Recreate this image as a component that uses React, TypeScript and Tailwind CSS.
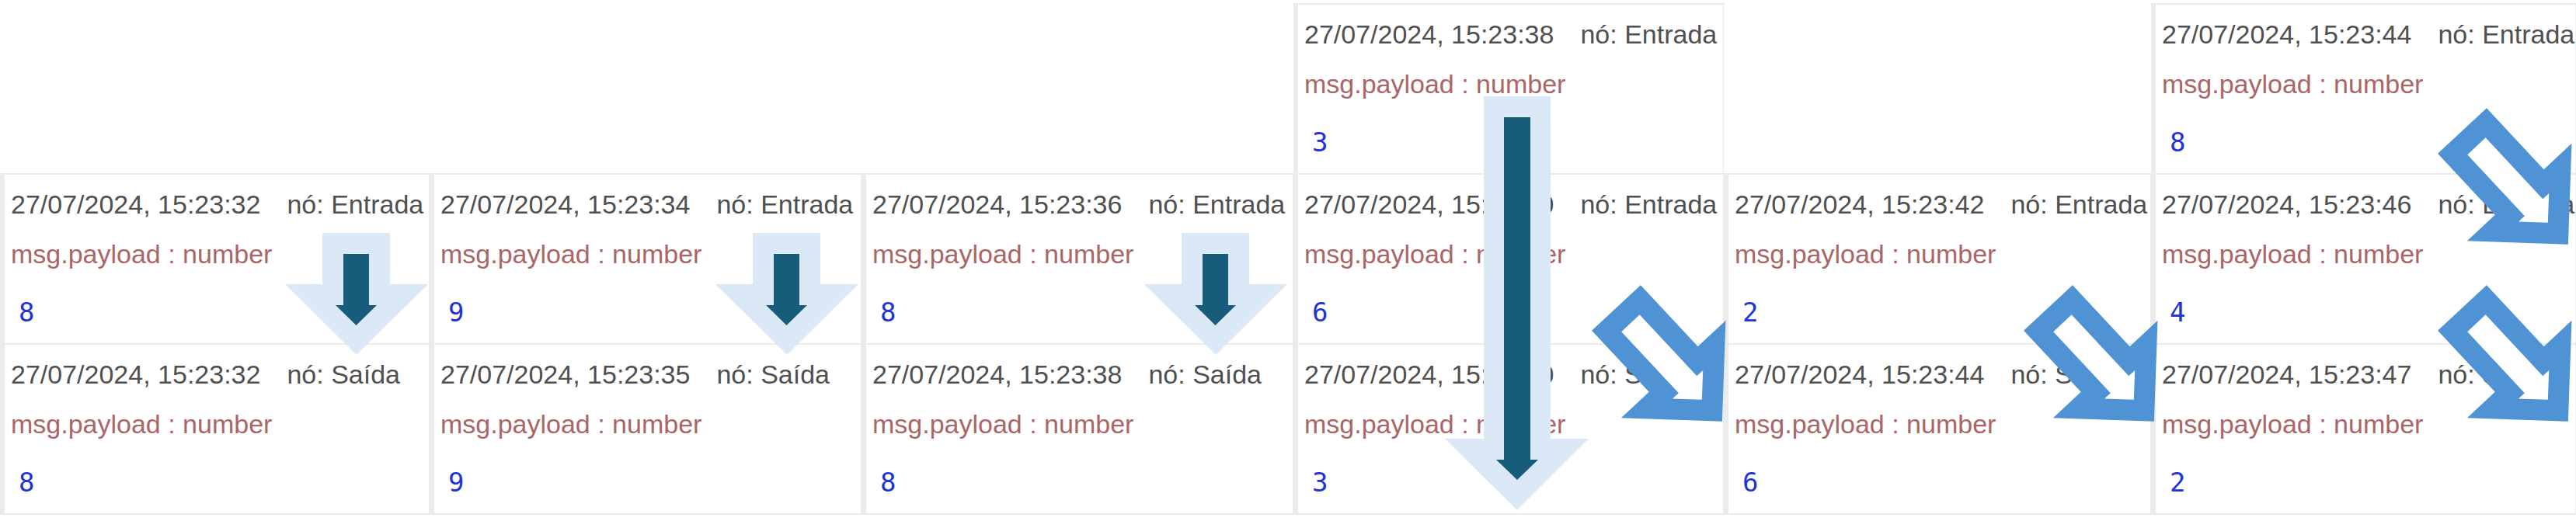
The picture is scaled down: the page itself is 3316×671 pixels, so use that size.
import React from "react";

type Card = { t: string; n: string; v: string };
type Col = { w: string; cards: Card[] };

const cols: Col[] = [
  { w: "w-[553px]", cards: [ { t: "15:23:32", n: "Entrada", v: "8" }, { t: "15:23:32", n: "Saída", v: "8" } ] },
  { w: "w-[556px]", cards: [ { t: "15:23:34", n: "Entrada", v: "9" }, { t: "15:23:35", n: "Saída", v: "9" } ] },
  { w: "w-[556px]", cards: [ { t: "15:23:36", n: "Entrada", v: "8" }, { t: "15:23:38", n: "Saída", v: "8" } ] },
  { w: "w-[554px]", cards: [ { t: "15:23:38", n: "Entrada", v: "3" }, { t: "15:23:40", n: "Entrada", v: "6" }, { t: "15:23:40", n: "Saída", v: "3" } ] },
  { w: "w-[550px]", cards: [ { t: "15:23:42", n: "Entrada", v: "2" }, { t: "15:23:44", n: "Saída", v: "6" } ] },
  { w: "w-[547px]", cards: [ { t: "15:23:44", n: "Entrada", v: "8" }, { t: "15:23:46", n: "Entrada", v: "4" }, { t: "15:23:47", n: "Saída", v: "2" } ] },
];

function DebugCard({ c }: { c: Card }) {
  return (
    <div className="h-[219px] bg-white border-b-[2px] border-[#ebebeb] pl-[8px] pt-[18px] overflow-hidden">
      <div className="flex whitespace-nowrap h-[40px] leading-[40px] text-[34px] text-[#505050] font-['Liberation_Sans',Arial,sans-serif]">
        <span className="mr-[34px]">27/07/2024, {c.t}</span>
        <span>nó: {c.n}</span>
      </div>
      <div className="mt-[24px] whitespace-nowrap h-[40px] leading-[40px] text-[34px] text-[#aa6666] font-['Liberation_Sans',Arial,sans-serif]">
        msg.payload : number
      </div>
      <div className="mt-[35px] ml-[10px] h-[40px] leading-[40px] text-[34px] text-[#2033d6] font-['DejaVu_Sans_Mono',monospace]">
        {c.v}
      </div>
    </div>
  );
}

const DIAG_OUTER = "M0 -43 L108 -43 L108 -92 L200 0 L108 92 L108 43 L0 43 Z";
const DIAG_INNER = "M27 -16 L135 -16 L135 -26.8 L161.8 0 L135 26.8 L135 16 L27 16 Z";

function Diag({ x, y }: { x: number; y: number }) {
  return (
    <g transform={`translate(${x} ${y}) rotate(47)`}>
      <path d={DIAG_OUTER} fill="#4f93d5" />
      <path d={DIAG_INNER} fill="#ffffff" />
    </g>
  );
}

function ShortDown({ x }: { x: number }) {
  return (
    <g transform={`translate(${x} 300)`}>
      <path d="M48 0 H135 V66 H184 L92 157 L0 66 H48 Z" fill="#dbe8f5" />
      <path d="M75 27 H108 V93 H118 L91.5 119 L65 93 H75 Z" fill="#185c7c" />
    </g>
  );
}

export default function App() {
  return (
    <div className="relative w-[3316px] h-[671px] bg-white overflow-hidden">
      <div className="flex items-end h-full pb-[8px]">
        {cols.map((col, i) => (
          <div
            key={i}
            className={`${col.w} shrink-0 flex flex-col border-l-[6px] border-r-[1px] border-t-[2px] border-[#ebebeb]`}
          >
            {col.cards.map((c, j) => (
              <DebugCard key={j} c={c} />
            ))}
          </div>
        ))}
      </div>
      <svg
        className="absolute inset-0 pointer-events-none"
        width={3316}
        height={671}
        viewBox="0 0 3316 671"
      >
        <ShortDown x={367} />
        <ShortDown x={921} />
        <ShortDown x={1473} />
        <g transform="translate(1860 124)">
          <path d="M50 0 H136 V441 H185 L93 533 L0 441 H50 Z" fill="#dbe8f5" />
          <path d="M76 27 H110 V468 H120 L93 494 L66 468 H76 Z" fill="#185c7c" />
        </g>
        <Diag x={2080.5} y={396.5} />
        <Diag x={2636.5} y={396.5} />
        <Diag x={3169.5} y={168.5} />
        <Diag x={3169.5} y={396.5} />
      </svg>
    </div>
  );
}
